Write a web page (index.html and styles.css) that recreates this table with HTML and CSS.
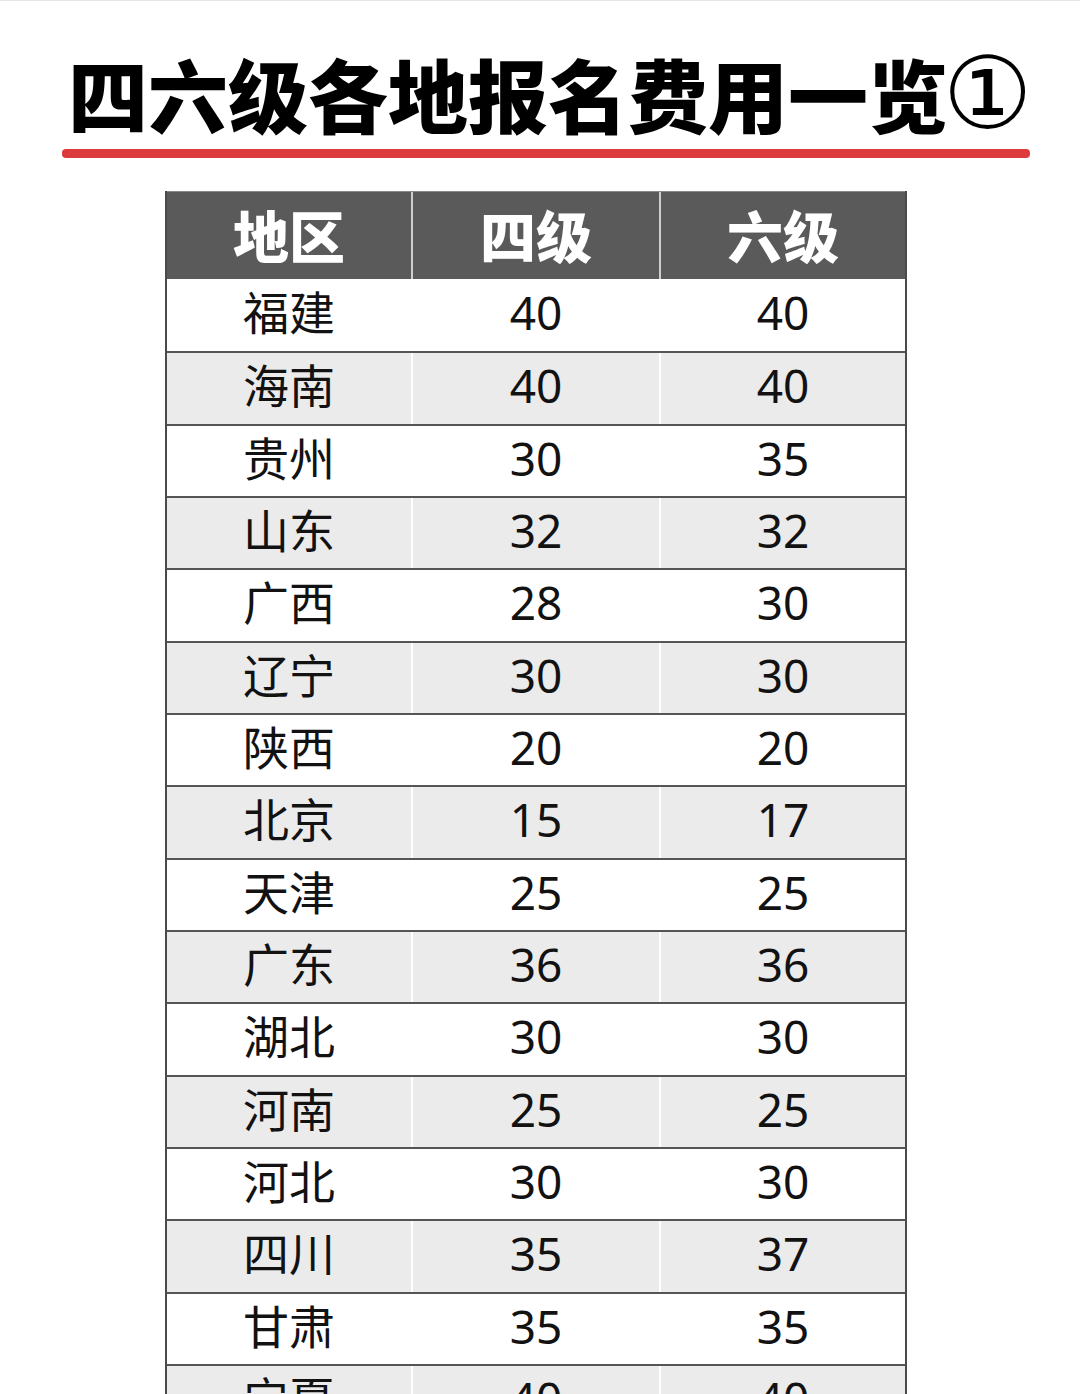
FILE: index.html
```html
<!DOCTYPE html>
<html lang="zh-CN">
<head>
<meta charset="utf-8">
<title>四六级各地报名费用一览①</title>
<link rel="stylesheet" href="styles.css">
</head>
<body>
<div class="page">
  <h1 class="title">四六级各地报名费用一览<span class="circled">①</span></h1>
  <div class="rule"></div>
  <div class="table">
    <div class="row head"><div class="cell">地区</div><div class="cell">四级</div><div class="cell">六级</div></div>
    <div class="row"><div class="cell">福建</div><div class="cell">40</div><div class="cell">40</div></div>
    <div class="row alt"><div class="cell">海南</div><div class="cell">40</div><div class="cell">40</div></div>
    <div class="row"><div class="cell">贵州</div><div class="cell">30</div><div class="cell">35</div></div>
    <div class="row alt"><div class="cell">山东</div><div class="cell">32</div><div class="cell">32</div></div>
    <div class="row"><div class="cell">广西</div><div class="cell">28</div><div class="cell">30</div></div>
    <div class="row alt"><div class="cell">辽宁</div><div class="cell">30</div><div class="cell">30</div></div>
    <div class="row"><div class="cell">陕西</div><div class="cell">20</div><div class="cell">20</div></div>
    <div class="row alt"><div class="cell">北京</div><div class="cell">15</div><div class="cell">17</div></div>
    <div class="row"><div class="cell">天津</div><div class="cell">25</div><div class="cell">25</div></div>
    <div class="row alt"><div class="cell">广东</div><div class="cell">36</div><div class="cell">36</div></div>
    <div class="row"><div class="cell">湖北</div><div class="cell">30</div><div class="cell">30</div></div>
    <div class="row alt"><div class="cell">河南</div><div class="cell">25</div><div class="cell">25</div></div>
    <div class="row"><div class="cell">河北</div><div class="cell">30</div><div class="cell">30</div></div>
    <div class="row alt"><div class="cell">四川</div><div class="cell">35</div><div class="cell">37</div></div>
    <div class="row"><div class="cell">甘肃</div><div class="cell">35</div><div class="cell">35</div></div>
    <div class="row alt"><div class="cell">宁夏</div><div class="cell">40</div><div class="cell">40</div></div>
  </div>
</div>
</body>
</html>
```

FILE: styles.css
```css
html, body {
  margin: 0;
  padding: 0;
  background: #ffffff;
}

body {
  font-family: "Noto Sans", "Noto Sans CJK SC", sans-serif;
  color: #111111;
  overflow: hidden;
}

.page {
  width: 1080px;
  height: 1394px;
  overflow: hidden;
  border-top: 1px solid #e6e6e6;
  box-sizing: border-box;
}

.title {
  margin: 51px 0 0 68px;
  height: 84px;
  font-family: "Noto Sans CJK SC", sans-serif;
  font-size: 80px;
  line-height: 80px;
  font-weight: 900;
  color: #000000;
  white-space: nowrap;
  letter-spacing: 0;
}

.circled {
  display: inline-block;
  margin-left: -5px;
  font-family: "DejaVu Serif", "DejaVu Sans", sans-serif;
  font-weight: 400;
  font-size: 100px;
  line-height: 80px;
  vertical-align: top;
  position: relative;
  top: 2px;
}

.rule {
  margin: 13px 0 0 62px;
  width: 968px;
  height: 9px;
  border-radius: 4px;
  background: #dd3a3c;
}

.table {
  margin: 33px 0 0 165px;
  width: 742px;
  border-left: 2px solid #4a4a4a;
  border-right: 2px solid #4a4a4a;
  box-sizing: border-box;
}

.row {
  display: grid;
  grid-template-columns: 244px 248px 246px;
  height: 72.33px;
  box-sizing: border-box;
  border-top: 2px solid #555555;
  background: #ffffff;
}

.row.alt {
  background: #ebebeb;
}

.row.head {
  height: 88px;
  border-top: 1px solid #8a8a8a;
  background: #5a5a5a;
}

.row.head + .row {
  border-top: none;
}

.cell {
  display: flex;
  align-items: center;
  justify-content: center;
  padding-bottom: 6px;
  box-sizing: border-box;
  font-size: 46px;
  font-weight: 400;
  line-height: 1;
  color: #121212;
}

.cell + .cell {
  border-left: 2px solid #ffffff;
}

.head .cell {
  padding-bottom: 4px;
  font-family: "Noto Sans CJK SC", sans-serif;
  font-size: 56px;
  font-weight: 900;
  color: #ffffff;
}

.head .cell + .cell {
  border-left: 2px solid #cfcfcf;
}
```
